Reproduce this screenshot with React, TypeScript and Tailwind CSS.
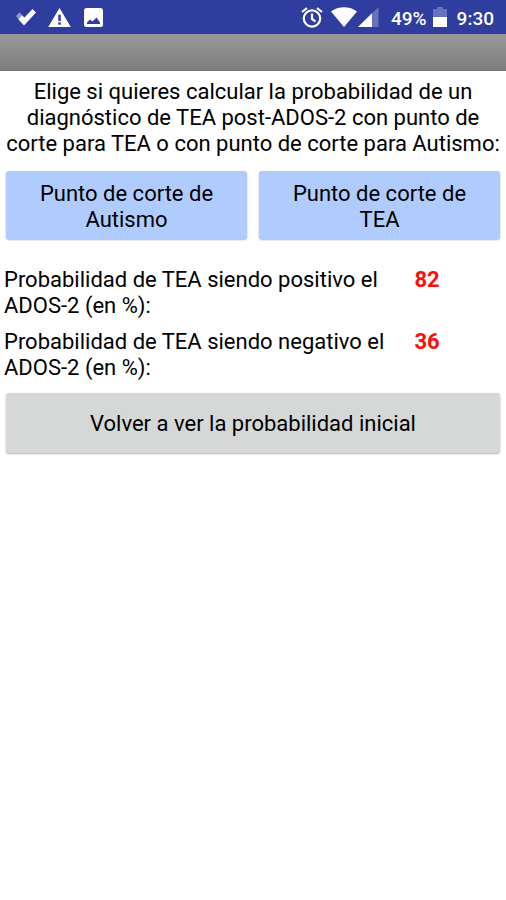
interface Result {
    id: string;
    label: string;
    value: number;
}

const results: Result[] = [
    { id: 'positive', label: 'Probabilidad de TEA siendo positivo el ADOS-2 (en %):', value: 82 },
    { id: 'negative', label: 'Probabilidad de TEA siendo negativo el ADOS-2 (en %):', value: 36 },
];

export default function App() {
    return (
        <div className="min-h-screen bg-white font-[Roboto,sans-serif] text-[22px] leading-[26px] text-black">
            <StatusBar />
            <div className="h-[37px] border-b border-[#777] bg-gradient-to-b from-[#999] to-[#7e7e7e]" />

            <main className="pt-2">
                <p className="px-1 text-center">
                    Elige si quieres calcular la probabilidad de un diagnóstico de TEA post-ADOS-2 con
                    punto de corte para TEA o con punto de corte para Autismo:
                </p>

                <div className="mt-3.5 grid grid-cols-2 gap-3 px-1.5">
                    <CutoffButton label="Punto de corte de Autismo" />
                    <CutoffButton label="Punto de corte de TEA" />
                </div>

                <dl className="mt-7 flex flex-col gap-2.5 px-1">
                    {results.map((result) => (
                        <ResultRow key={result.id} result={result} />
                    ))}
                </dl>

                <div className="mt-3 px-1.5">
                    <button
                        type="button"
                        className="w-full rounded-[3px] bg-[#d6d8d7] pt-[18px] pb-4 shadow-[0_1px_2px_rgba(0,0,0,0.3)]"
                    >
                        Volver a ver la probabilidad inicial
                    </button>
                </div>
            </main>
        </div>
    );
}

function CutoffButton({ label }: { label: string }) {
    return (
        <button
            type="button"
            className="rounded-[3px] bg-[#b0ccff] px-8 pt-2.5 pb-1.5 shadow-[0_1px_2px_rgba(0,0,0,0.3)]"
        >
            {label}
        </button>
    );
}

function ResultRow({ result }: { result: Result }) {
    return (
        <div className="flex">
            <dt className="w-4/5 pr-2">{result.label}</dt>
            <dd className="pl-3 font-bold text-[#ff0d0d]">{result.value}</dd>
        </div>
    );
}

function StatusBar() {
    return (
        <header className="flex h-[34px] items-center justify-between bg-[#2e3d9e] pt-0.5 pr-3 pl-4 text-white">
            <div className="flex items-center gap-3">
                {/* Check mark */}
                <svg viewBox="0 0 20 22" className="h-[22px] w-5" aria-hidden="true">
                    <path d="M0 9 3.500 5.500 7 9 3 13Z" fill="#8d97cf" />
                    <path d="M2.500 12.500 6 8.500 8.500 10.500 16.500 2 20 5.500 8 18.500Z" fill="currentColor" />
                </svg>

                {/* Warning */}
                <svg viewBox="0 0 24 22" className="h-[22px] w-[23px]" aria-hidden="true">
                    <path d="M12 .5 23.800 20.500H.2Z" fill="currentColor" />
                    <path d="M10.700 7.500h2.600v6.500h-2.600ZM10.700 15.500h2.600v2.500h-2.600Z" fill="#2e3d9e" />
                </svg>

                {/* Picture */}
                <svg viewBox="0 0 22 22" className="size-[22px]" aria-hidden="true">
                    <rect x="1" y="1" width="19" height="19" rx="2.500" fill="currentColor" />
                    <path d="M4 17v-1.500l3-3 2.500 2 4-4 3.500 5V17Z" fill="#2e3d9e" />
                </svg>
            </div>

            <div className="flex items-center text-[19px] font-medium">
                {/* Alarm */}
                <svg
                    viewBox="0 0 22 22"
                    className="size-[22px]"
                    fill="none"
                    stroke="currentColor"
                    strokeWidth="2.2"
                    aria-hidden="true"
                >
                    <circle cx="11" cy="11.500" r="8.200" />
                    <path d="M11 6.500v5.500l3.500 2.500M1 5l5-4M21 5l-5-4" />
                </svg>

                {/* Wi-Fi */}
                <svg viewBox="0 0 26 22" className="ml-2 h-[22px] w-[26px]" aria-hidden="true">
                    <path d="M0 4.500C7-1.200 19-1.200 26 4.500L13 20Z" fill="currentColor" />
                </svg>

                {/* Mobile signal */}
                <svg viewBox="0 0 21 22" className="ml-[1px] h-[22px] w-[21px]" aria-hidden="true">
                    <path d="M0 20 20.500 0v20Z" fill="#6672bb" />
                    <path d="M0 20 14 6.300V20Z" fill="currentColor" />
                </svg>

                <span className="ml-3 pt-0.5">49%</span>

                {/* Battery */}
                <svg viewBox="0 0 14 22" className="ml-1.5 h-[22px] w-3.5" aria-hidden="true">
                    <path d="M4 0h6v2h4v9H0V2h4Z" fill="#6672bb" />
                    <path d="M0 10h14v10H0Z" fill="currentColor" />
                </svg>

                <span className="ml-2.5 pt-0.5">9:30</span>
            </div>
        </header>
    );
}
